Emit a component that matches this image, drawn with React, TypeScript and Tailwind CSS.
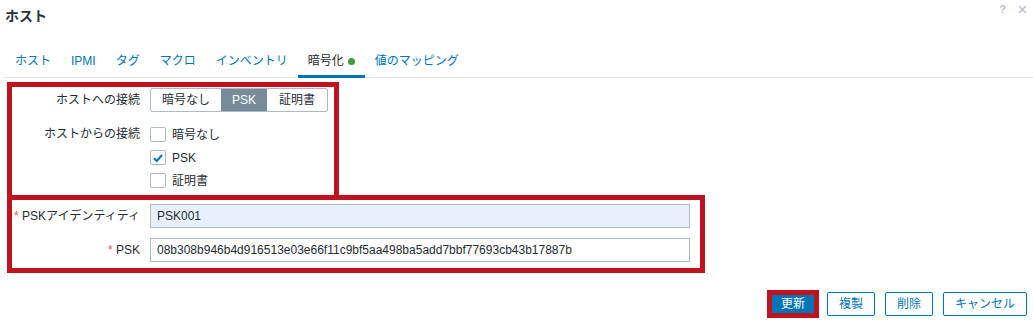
import React from "react";

const tabs = ["ホスト", "IPMI", "タグ", "マクロ", "インベントリ", "暗号化", "値のマッピング"];

const CheckRow: React.FC<{ label: string; checked?: boolean }> = ({ label, checked }) => (
  <div className="flex items-center h-[23px]">
    <span className="w-[16px] h-[15px] border border-[#acbbc2] rounded-[2px] bg-white flex items-center justify-center">
      {checked && (
        <svg width="12" height="12" viewBox="0 0 12 12" aria-hidden>
          <path d="M2 6.2 L4.8 9 L10 3" stroke="#0275b8" strokeWidth={2} fill="none" />
        </svg>
      )}
    </span>
    <span className="ml-[6px]">{label}</span>
  </div>
);

const App: React.FC = () => {
  return (
    <div className="w-[1033px] h-[322px] bg-white text-[12px] text-[#1f2c33] font-['Liberation_Sans','Noto_Sans_CJK_JP',sans-serif] overflow-hidden">
      {/* header */}
      <div className="flex justify-between items-start h-[47px]">
        <div className="pl-[5px] pt-[7px] text-[14px] leading-[18px] font-bold text-[#2a3439]">ホスト</div>
        <div className="flex items-center gap-[12px] pr-[6px] pt-[3px] text-[#b8c4ca]">
          <span className="text-[11px] font-bold leading-[12px]">?</span>
          <svg width="9" height="9" viewBox="0 0 9 9" aria-hidden>
            <path d="M1 1 L8 8 M8 1 L1 8" stroke="#b8c4ca" strokeWidth={1.6} />
          </svg>
        </div>
      </div>

      {/* tabs */}
      <div className="ml-[4px] border-b border-[#e4e8ea]">
        <div className="flex pl-[1px]">
          {tabs.map((t) => {
            const active = t === "暗号化";
            return (
              <div
                key={t}
                className={
                  active
                    ? "h-[31px] -mb-px px-[10px] flex items-center border-b-[3px] border-[#0275b8] text-[#1f2c33]"
                    : "h-[31px] -mb-px px-[10px] flex items-center pb-[3px] text-[#0275b8]"
                }
              >
                {t}
                {active && <span className="ml-[4px] w-[7px] h-[7px] rounded-full bg-[#3f9f3f]" />}
              </div>
            );
          })}
        </div>
      </div>

      {/* box 1 */}
      <div className="ml-[7px] mt-[4px] w-[332px] border-[5px] border-b-0 border-[#c1121f] pt-[1px] pb-[3px]">
        <div className="flex items-center h-[24px]">
          <div className="w-[128px] text-right shrink-0">ホストへの接続</div>
          <div className="ml-[10px] flex h-[24px] border border-[#acbbc2] rounded-[2px] overflow-hidden">
            <span className="px-[11px] flex items-center">暗号なし</span>
            <span className="px-[11px] flex items-center bg-[#768d99] text-white">PSK</span>
            <span className="px-[12px] flex items-center">証明書</span>
          </div>
        </div>
        <div className="flex mt-[11px]">
          <div className="w-[128px] text-right shrink-0 h-[23px] leading-[23px]">ホストからの接続</div>
          <div className="ml-[10px] flex flex-col">
            <CheckRow label="暗号なし" />
            <CheckRow label="PSK" checked />
            <CheckRow label="証明書" />
          </div>
        </div>
      </div>

      {/* box 2 */}
      <div className="ml-[7px] w-[698px] border-[5px] border-[#c1121f] pt-[4px] pb-[6px]">
        <div className="flex items-center h-[24px]">
          <div className="w-[128px] text-right shrink-0 whitespace-nowrap">
            <span className="text-[#e45959]">*</span> PSKアイデンティティ
          </div>
          <div className="ml-[10px] w-[540px] h-[24px] border border-[#acbbc2] bg-[#e8f0fe] px-[6px] flex items-center">
            PSK001
          </div>
        </div>
        <div className="flex items-center h-[24px] mt-[10px]">
          <div className="w-[128px] text-right shrink-0 whitespace-nowrap">
            <span className="text-[#e45959]">*</span> PSK
          </div>
          <div className="ml-[10px] w-[540px] h-[24px] border border-[#acbbc2] bg-white px-[6px] flex items-center">
            08b308b946b4d916513e03e66f11c9bf5aa498ba5add7bbf77693cb43b17887b
          </div>
        </div>
      </div>

      {/* buttons */}
      <div className="flex justify-end items-center gap-[10px] pr-[6px] mt-[17px]">
        <div className="-mr-[2px] border-[5px] border-[#c1121f] w-[52px] h-[28px] bg-[#0275b8] text-white flex items-center justify-center">
          更新
        </div>
        <div className="h-[24px] px-[11px] border border-[#0275b8] rounded-[2px] text-[#0275b8] flex items-center">複製</div>
        <div className="h-[24px] px-[11px] border border-[#0275b8] rounded-[2px] text-[#0275b8] flex items-center">削除</div>
        <div className="h-[24px] px-[11px] border border-[#0275b8] rounded-[2px] text-[#0275b8] flex items-center">キャンセル</div>
      </div>
    </div>
  );
};

export default App;
